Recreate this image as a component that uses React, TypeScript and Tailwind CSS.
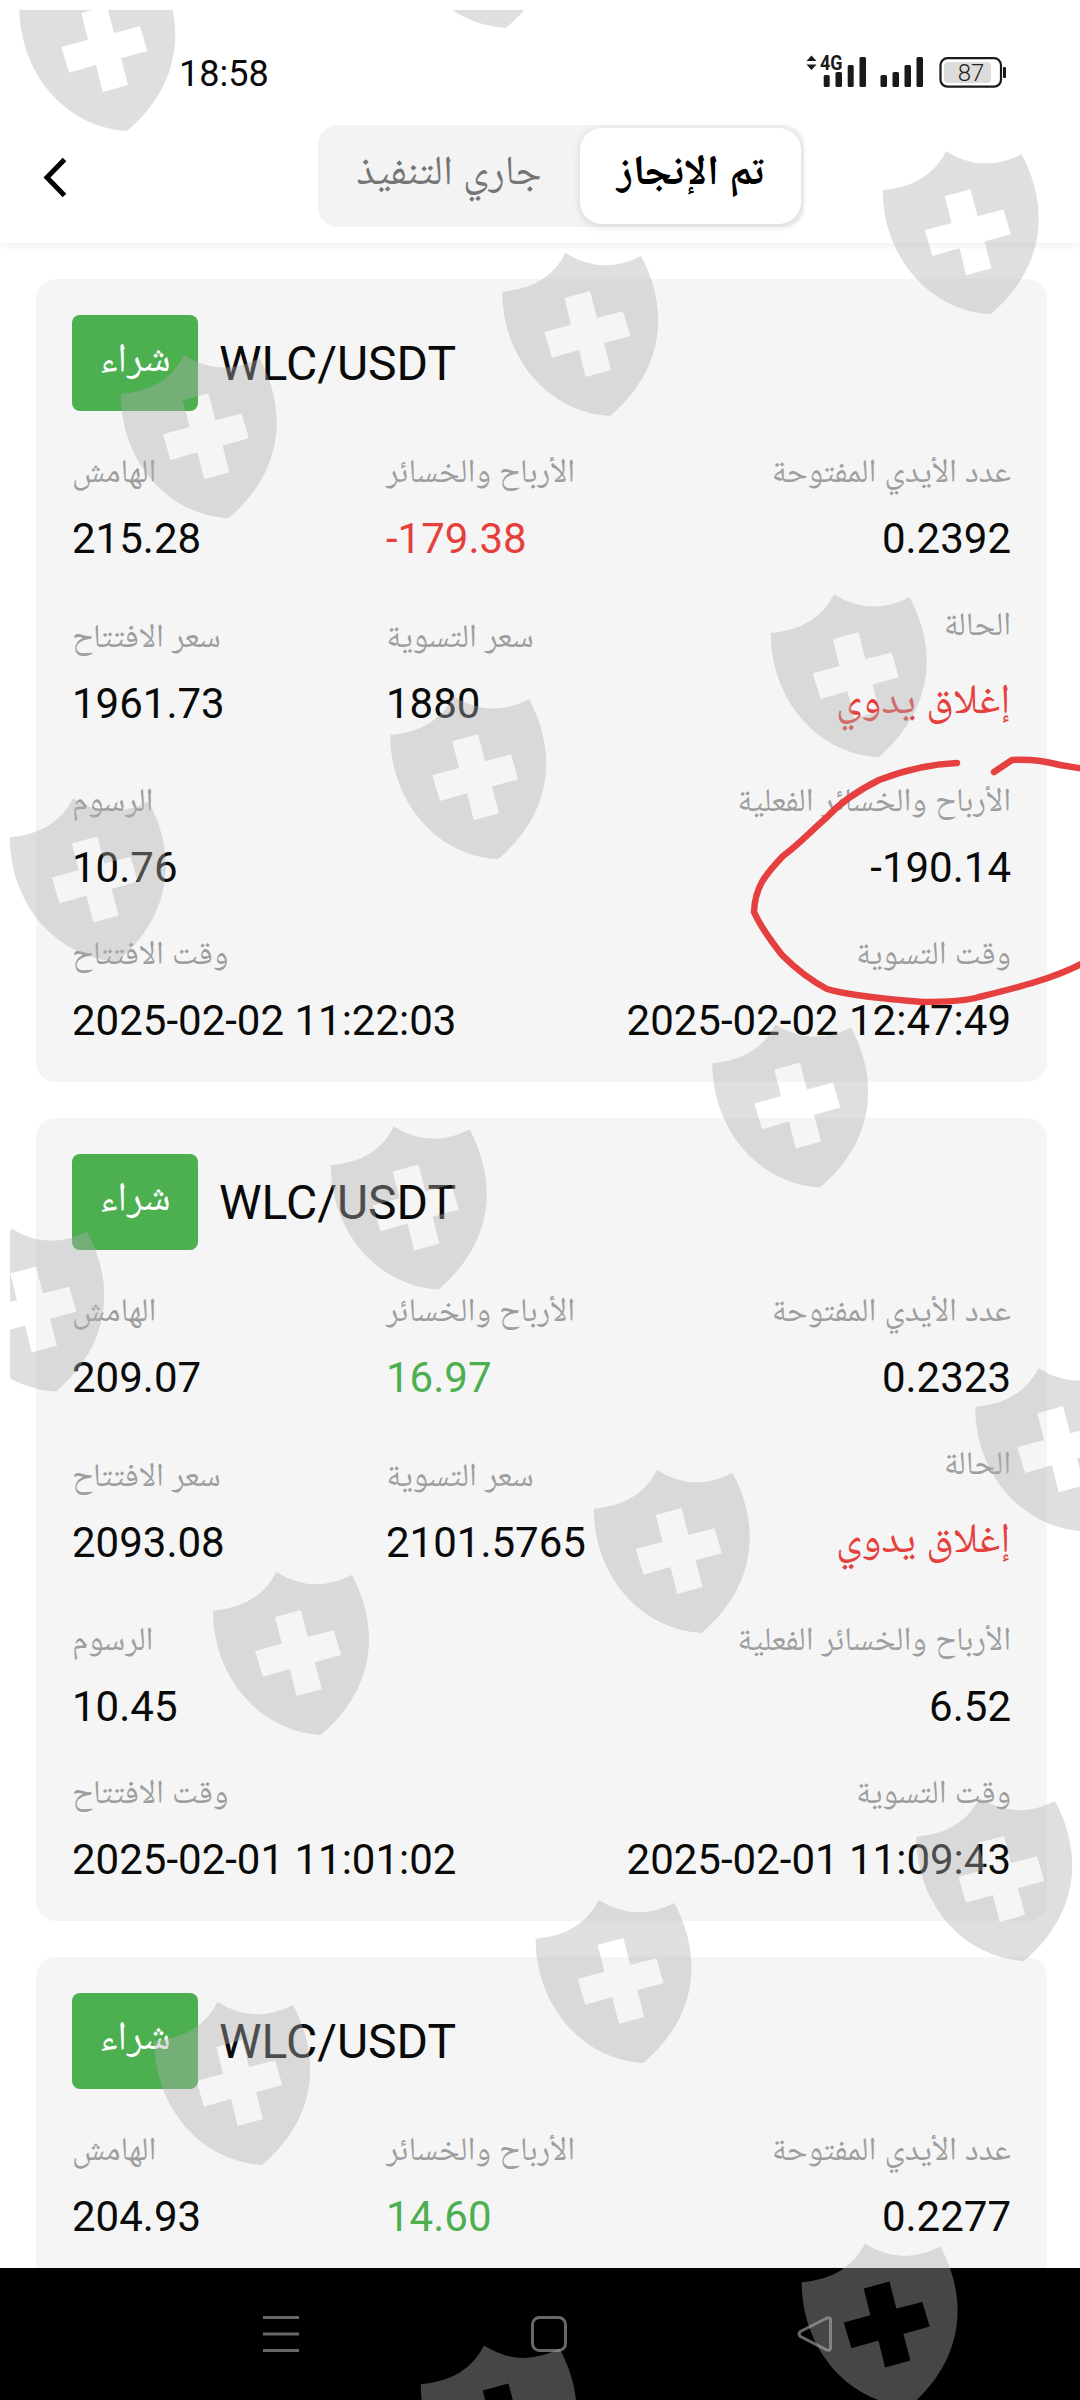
// top-left corner of every shield of the watermark
const SHIELDS = [
  [-3, -55],
  [376, -158],
  [860.5, 128.3],
  [480, 230],
  [98.5, 332.3],
  [748.5, 571.3],
  [368, 673.3],
  [-12.5, 775.5],
  [690, 1001.5],
  [308.5, 1103.5],
  [-74, 1205.5],
  [953, 1345.3],
  [571.5, 1447],
  [190.8, 1549],
  [894, 1775],
  [513.3, 1877],
  [132, 1979],
  [779.4, 2220.6],
  [398.5, 2322.6],
];

type Order = {
  margin: string;
  profit: string;
  profitColor: string;
  lots: string;
  openPrice?: string;
  closePrice?: string;
  fee?: string;
  net?: string;
  openedAt?: string;
  closedAt?: string;
};

const ORDERS: Order[] = [
  {
    margin: "215.28",
    profit: "-179.38",
    profitColor: "text-[#e5403b]",
    lots: "0.2392",
    openPrice: "1961.73",
    closePrice: "1880",
    fee: "10.76",
    net: "-190.14",
    openedAt: "2025-02-02 11:22:03",
    closedAt: "2025-02-02 12:47:49",
  },
  {
    margin: "209.07",
    profit: "16.97",
    profitColor: "text-[#4caf50]",
    lots: "0.2323",
    openPrice: "2093.08",
    closePrice: "2101.5765",
    fee: "10.45",
    net: "6.52",
    openedAt: "2025-02-01 11:01:02",
    closedAt: "2025-02-01 11:09:43",
  },
  {
    margin: "204.93",
    profit: "14.60",
    profitColor: "text-[#4caf50]",
    lots: "0.2277",
  },
];

type FieldProps = {
  label: string;
  value?: string;
  color?: string;
  end?: boolean;
};

function Field({ label, value, color = "text-[#0a0a0a]", end = false }: FieldProps) {
  return (
    <div className={end ? "flex flex-col items-end" : "flex flex-col items-start"}>
      <span dir="rtl" className="h-[42px] text-[33px] leading-[48px] whitespace-nowrap text-[#9e9e9e]">
        {label}
      </span>
      <span className={`mt-[21px] h-[50px] text-[42px] leading-[50px] whitespace-nowrap ${color}`}>{value}</span>
    </div>
  );
}

function OrderCard({ order }: { order: Order }) {
  return (
    <div className="h-[803px] shrink-0 rounded-[20px] bg-[#f5f5f5] px-9 pt-9">
      <div className="flex items-center">
        <div className="flex h-24 w-[126px] items-center justify-center rounded-lg bg-[#4caf50]">
          <span dir="rtl" className="text-[41px] leading-none text-white">
            شراء
          </span>
        </div>
        <span className="mt-0.5 ml-[21px] text-[48px] leading-none text-[#0a0a0a]">WLC/USDT</span>
      </div>

      <div className="mt-10 grid h-[165px] grid-cols-[314px_312px_1fr]">
        <Field label="الهامش" value={order.margin} />
        <Field label="الأرباح والخسائر" value={order.profit} color={order.profitColor} />
        <Field label="عدد الأيدي المفتوحة" value={order.lots} end />
      </div>

      {order.openPrice ? (
        <>
          <div className="grid h-[164px] grid-cols-[314px_312px_1fr]">
            <Field label="سعر الافتتاح" value={order.openPrice} />
            <Field label="سعر التسوية" value={order.closePrice} />
            <div dir="rtl" className="-mt-3 flex flex-col items-start whitespace-nowrap">
              <span className="h-[42px] text-[33px] leading-[48px] text-[#9e9e9e]">الحالة</span>
              <span className="mt-[27px] text-[42px] leading-[64px] text-[#e5403b]">إغلاق يدوي</span>
            </div>
          </div>
          <div className="flex h-[153px] justify-between">
            <Field label="الرسوم" value={order.fee} />
            <Field label="الأرباح والخسائر الفعلية" value={order.net} end />
          </div>
          <div className="flex justify-between">
            <Field label="وقت الافتتاح" value={order.openedAt} />
            <Field label="وقت التسوية" value={order.closedAt} end />
          </div>
        </>
      ) : null}
    </div>
  );
}

function StatusIcons() {
  return (
    <svg width="210" height="40" viewBox="0 0 210 40" className="mt-[52px] mr-[70px]">
      <g fill="#1a1a1a">
        <path d="M11.5 3.5l5 5.5h-10zM11.5 18l5-5.5h-10z" />
        <rect x="23.7" y="23" width="6" height="12" rx="1.5" />
        <rect x="35.5" y="20" width="6.5" height="15" rx="1.5" />
        <rect x="47.7" y="13" width="6" height="22" rx="1.5" />
        <rect x="59.5" y="5" width="6.5" height="30" rx="1.5" />
        <rect x="80.5" y="23" width="6.5" height="12" rx="1.5" />
        <rect x="92.5" y="20" width="6.5" height="15" rx="1.5" />
        <rect x="104.5" y="13" width="6.5" height="22" rx="1.5" />
        <rect x="116.5" y="5" width="6.5" height="30" rx="1.5" />
        <rect x="203" y="15" width="3" height="11" rx="1" />
      </g>
      <rect x="140.5" y="6.2" width="60.5" height="28.5" rx="7" fill="none" stroke="#1a1a1a" strokeWidth="2.2" />
      <rect x="144" y="10" width="47" height="21" rx="4" fill="#dcdcdc" />
      <text x="171" y="29" textAnchor="middle" fontSize="24" fontWeight="300" fill="#222">
        87
      </text>
      <text x="20" y="18" fontSize="21" fontWeight="700" textLength="22.5" lengthAdjust="spacingAndGlyphs" fill="#1a1a1a">
        4G
      </text>
    </svg>
  );
}

export default function App() {
  return (
    <div className="relative flex h-[2400px] w-[1080px] flex-col overflow-hidden bg-white font-[Roboto,'Noto_Naskh_Arabic_UI','Noto_Naskh_Arabic',sans-serif]">
      <header className="z-10 h-[243px] shrink-0 bg-white shadow-[0_2px_8px_rgba(0,0,0,0.07)]">
        <div className="flex h-[125px] justify-between">
          <span className="mt-[53px] ml-[179px] text-[36px] leading-[42px] text-[#0a0a0a]">18:58</span>
          <StatusIcons />
        </div>
        <div className="flex h-[102px]">
          <svg width="24" height="42" viewBox="0 0 24 42" className="mt-[32px] ml-[43px]">
            <path d="M21.5 2.500L4 20.500l17.5 18" fill="none" stroke="#000" strokeWidth="5" />
          </svg>
          <div className="ml-[251px] flex w-[486px] rounded-[20px] bg-[#f3f3f3] p-[3px] pl-0">
            <div dir="rtl" className="flex w-[262px] items-center justify-center text-[41.5px] leading-none text-[#757575]">
              جاري التنفيذ
            </div>
            <div
              dir="rtl"
              className="flex flex-1 items-center justify-center rounded-[22px] bg-white text-[42px] leading-none font-bold text-black shadow-[0_2px_10px_rgba(0,0,0,0.12)]"
            >
              تم الإنجاز
            </div>
          </div>
        </div>
      </header>

      <main className="flex min-h-0 flex-1 flex-col gap-9 overflow-hidden pt-9 pr-[33px] pl-9">
        {ORDERS.map((order) => (
          <OrderCard key={order.margin} order={order} />
        ))}
      </main>

      <nav className="h-[132px] shrink-0 bg-black">
        <svg width="1080" height="132" viewBox="0 0 1080 132" fill="none" stroke="#686868" strokeWidth="3">
          <path d="M263 49.5h36M263 66h36M263 82.5h36" />
          <rect x="532.5" y="49.5" width="33" height="33" rx="7" />
          <path d="M827 50L800.5 63.5q-3 2.5 0 5L827 82q3.5 1 3.5-2V52q0-3-3.5-2z" />
        </svg>
      </nav>

      <svg
        width="1070"
        height="2390"
        viewBox="10 10 1070 2390"
        className="pointer-events-none absolute top-[10px] left-[10px] z-20"
      >
        <g fill="#afafaf" fillOpacity="0.4" fillRule="evenodd">
          {SHIELDS.map(([x, y]) => (
            <path
              key={`${x}-${y}`}
              transform={`translate(${x} ${y})`}
              d="M22.3 61.7Q68 58 85.5 23Q122 46 161 26C190 80 184 140 130 186C66 182 22 125 22.3 61.7ZM84.3 68L110 61L117 88L143 81.3L150.3 106L124 113.3L131 140L105.7 147L99 120L72 127.7L64.3 102L91 94.7Z"
            />
          ))}
        </g>
        <g fill="none" stroke="#e5403f" strokeWidth="6.5" strokeLinecap="round" strokeLinejoin="round">
          <path d="M957 763C930 764 905 770 879 780C853 793 838 805 826 818C810 832 798 845 783 856C765 875 755 887 754 912C762 930 773 943 782 955C797 970 810 980 827 989C850 996 890 999 922 1002C950 1002 965 1001 979 997C1020 987 1055 978 1085 962" />
          <path d="M994 772L1012 760C1030 759 1045 761 1060 765L1085 769" />
        </g>
      </svg>
    </div>
  );
}
